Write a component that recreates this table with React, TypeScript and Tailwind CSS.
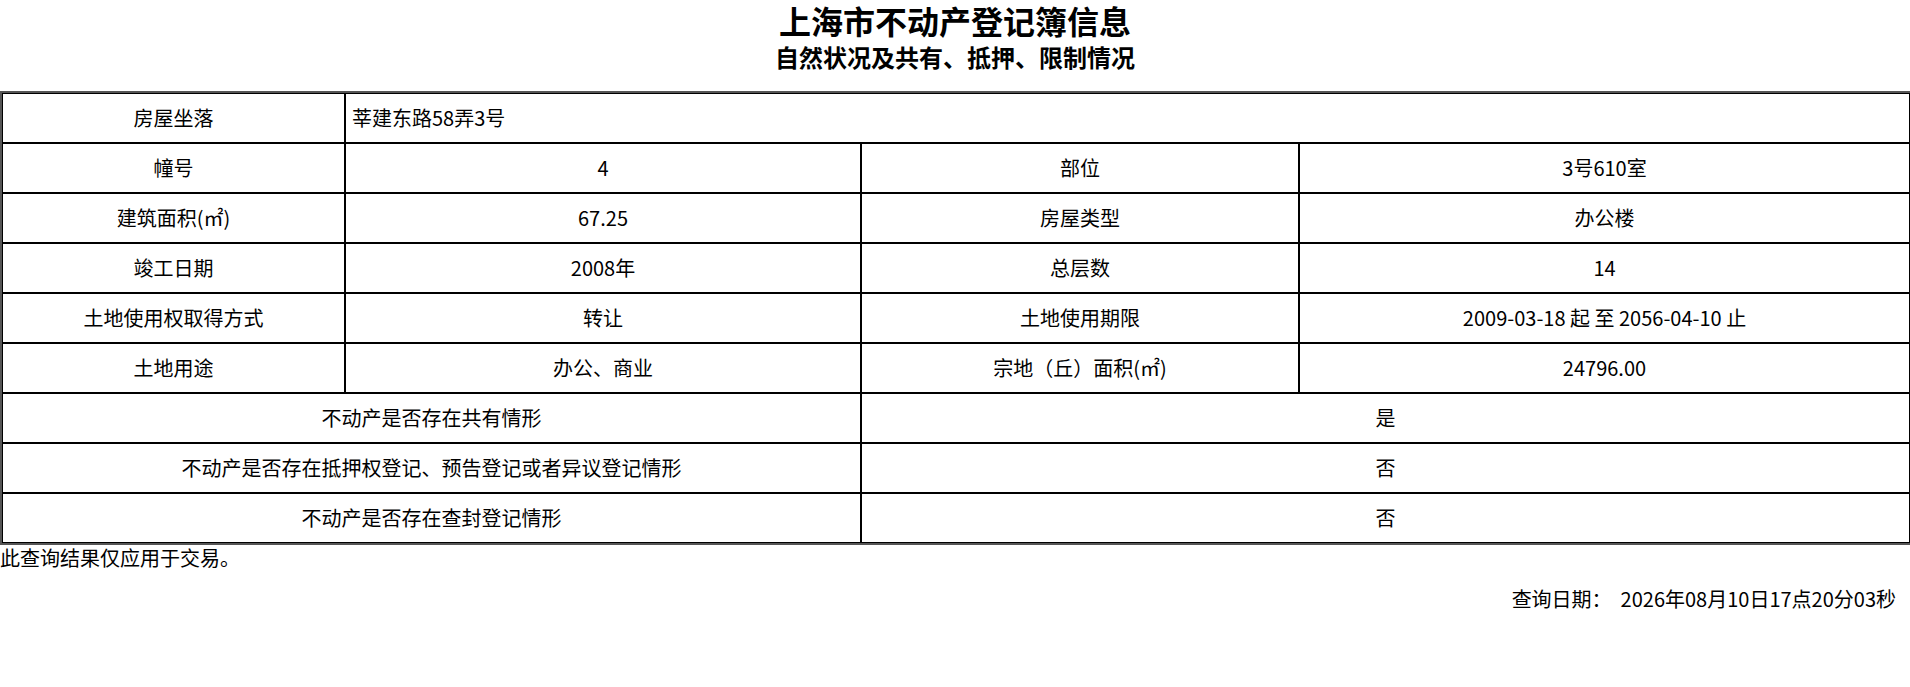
import React from "react";

const font = "font-['Noto_Sans_CJK_SC','Noto_Sans',sans-serif]";
const cell = "border border-black h-[50px] p-0 text-center align-middle leading-none";

type Pair = [string, string, string, string];

const pairs: Pair[] = [
  ["幢号", "4", "部位", "3号610室"],
  ["建筑面积(㎡)", "67.25", "房屋类型", "办公楼"],
  ["竣工日期", "2008年", "总层数", "14"],
  ["土地使用权取得方式", "转让", "土地使用期限", "2009-03-18 起 至 2056-04-10 止"],
  ["土地用途", "办公、商业", "宗地（丘）面积(㎡)", "24796.00"],
];

const flags: [string, string][] = [
  ["不动产是否存在共有情形", "是"],
  ["不动产是否存在抵押权登记、预告登记或者异议登记情形", "否"],
  ["不动产是否存在查封登记情形", "否"],
];

export default function App() {
  return (
    <div className={`w-[1910px] min-h-[687px] bg-white text-black ${font}`}>
      {/* header */}
      <div className="text-center">
        <h1 className="text-[32px] font-bold leading-[40px]">上海市不动产登记簿信息</h1>
        <h2 className="mt-[2px] text-[24px] font-bold leading-[30px]">
          自然状况及共有、抵押、限制情况
        </h2>
      </div>

      <table className="mt-[19px] w-full table-fixed border-separate border-spacing-0 border-l-2 border-t-2 border-b-2 border-[#555] text-[20px]">
        <colgroup>
          <col className="w-[343px]" />
          <col className="w-[516px]" />
          <col className="w-[438px]" />
          <col />
        </colgroup>
        <tbody>
          <tr>
            <td className={cell}>房屋坐落</td>
            <td colSpan={3} className={`${cell} !text-left pl-[6px]`}>
              莘建东路58弄3号
            </td>
          </tr>
          {pairs.map((p) => (
            <tr key={p[0]}>
              {p.map((v, i) => (
                <td key={i} className={cell}>
                  {v}
                </td>
              ))}
            </tr>
          ))}
          {flags.map(([q, a]) => (
            <tr key={q}>
              <td colSpan={2} className={cell}>
                {q}
              </td>
              <td colSpan={2} className={cell}>
                {a}
              </td>
            </tr>
          ))}
        </tbody>
      </table>

      <div className="text-[20px] leading-[26px]">此查询结果仅应用于交易。</div>
      <div className="mt-[15px] pr-[14px] text-right text-[20px] leading-[26px]">
        查询日期：&nbsp;&nbsp;2026年08月10日17点20分03秒
      </div>
    </div>
  );
}
